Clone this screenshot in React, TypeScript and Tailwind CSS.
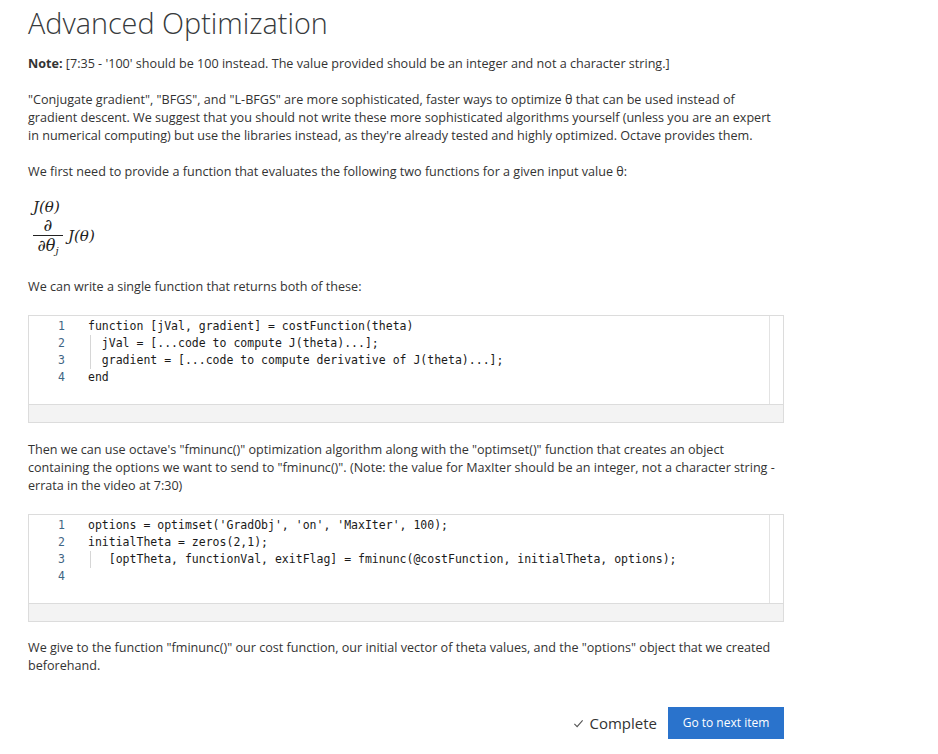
const code1 = [
  { n: 1, text: "function [jVal, gradient] = costFunction(theta)", guide: false },
  { n: 2, text: "  jVal = [...code to compute J(theta)...];", guide: true },
  { n: 3, text: "  gradient = [...code to compute derivative of J(theta)...];", guide: true },
  { n: 4, text: "end", guide: false },
];

const code2 = [
  { n: 1, text: "options = optimset('GradObj', 'on', 'MaxIter', 100);", guide: false },
  { n: 2, text: "initialTheta = zeros(2,1);", guide: false },
  { n: 3, text: "   [optTheta, functionVal, exitFlag] = fminunc(@costFunction, initialTheta, options);", guide: true },
  { n: 4, text: "", guide: false },
];

type Line = { n: number; text: string; guide: boolean };

/** Read-only code editor block with gutter and grey footer strip. */
function CodeBlock({ lines }: { lines: Line[] }) {
  return (
    <div className="border border-[#dcdcdc] bg-white">
      <div className="flex h-[88px]">
        <div className="flex-1 pt-[2px] font-['DejaVu_Sans_Mono',monospace] text-[11.5px] leading-[17px] text-[#1a1a1a]">
          {lines.map((l) => (
            <div key={l.n} className="flex h-[17px]">
              <span className="w-[36px] shrink-0 text-right text-[#3f6684]">{l.n}</span>
              <span className="relative ml-[23px] whitespace-pre">
                {l.guide && (
                  <span className="absolute left-[2px] top-0 h-full w-px bg-[#d6d6d6]" />
                )}
                {l.text}
              </span>
            </div>
          ))}
        </div>
        <div className="w-[14px] shrink-0 border-l border-[#e3e3e3]" />
      </div>
      <div className="h-[18px] border-t border-[#dcdcdc] bg-[#f3f3f3]" />
    </div>
  );
}

export default function App() {
  return (
    <div className="min-h-[754px] w-[938px] bg-white font-['Open_Sans',sans-serif] text-[#333]">
      <div className="w-[784px] pl-[28px]">
        <h1 className="pt-[4px] text-[28.8px] font-light leading-[38px] text-[#373a3c]">
          Advanced Optimization
        </h1>

        <div className="mt-[13px] text-[12.6px] leading-[18px]">
          <p>
            <b className="font-bold">Note:</b> [7:35 - '100' should be 100 instead. The value provided
            should be an integer and not a character string.]
          </p>

          <p className="mt-[18px]">
            "Conjugate gradient", "BFGS", and "L-BFGS" are more sophisticated, faster ways to optimize θ
            that can be used instead of gradient descent. We suggest that you should not write these more
            sophisticated algorithms yourself (unless you are an expert in numerical computing) but use
            the libraries instead, as they're already tested and highly optimized. Octave provides them.
          </p>

          <p className="mt-[18px]">
            We first need to provide a function that evaluates the following two functions for a given
            input value θ:
          </p>
        </div>

        {/* math */}
        <div className="mt-[17px] pl-[5px] font-['DejaVu_Serif','Liberation_Serif',serif] text-[15px] text-[#222]">
          <div className="italic leading-[18px]">J(θ)</div>
          <div className="flex items-center gap-[5px]">
            <div className="flex flex-col items-center">
              <span className="text-[17px] italic leading-[19px]">∂</span>
              <span className="h-px w-[30px] bg-[#222]" />
              <span className="text-[16px] italic leading-[20px]">
                ∂θ<sub className="text-[10px]">j</sub>
              </span>
            </div>
            <span className="italic">J(θ)</span>
          </div>
        </div>

        <p className="mt-[22px] text-[12.6px] leading-[18px]">
          We can write a single function that returns both of these:
        </p>

        <div className="mt-[19px]">
          <CodeBlock lines={code1} />
        </div>

        <p className="mt-[18px] text-[12.6px] leading-[18px]">
          Then we can use octave's "fminunc()" optimization algorithm along with the "optimset()" function
          that creates an object containing the options we want to send to "fminunc()". (Note: the value
          for MaxIter should be an integer, not a character string - errata in the video at 7:30)
        </p>

        <div className="mt-[19px]">
          <CodeBlock lines={code2} />
        </div>

        <p className="mt-[17px] text-[12.6px] leading-[18px]">
          We give to the function "fminunc()" our cost function, our initial vector of theta values, and
          the "options" object that we created beforehand.
        </p>

        <div className="mt-[32px] flex items-center justify-end gap-[11px]">
          <span className="flex items-center gap-[5px] text-[15px] text-[#333]">
            <svg viewBox="0 0 12 12" className="h-[11px] w-[11px]" fill="none" stroke="#555" strokeWidth="1.2">
              <path d="M1.5 6.5 4.5 9.5 10.5 2.5" />
            </svg>
            Complete
          </span>
          <button className="h-[32px] w-[116px] bg-[#2a73cc] text-[12px] text-white">
            Go to next item
          </button>
        </div>
      </div>
    </div>
  );
}
